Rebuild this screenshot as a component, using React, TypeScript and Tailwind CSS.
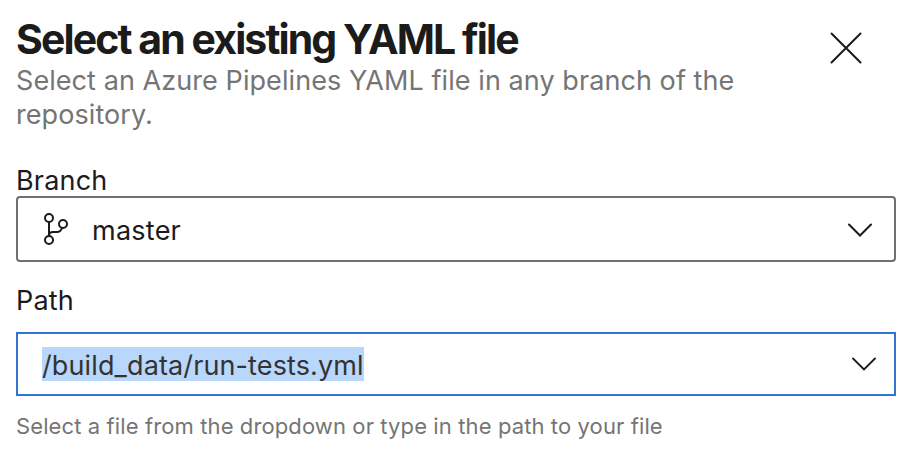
export default function App() {
  return (
    <main className="h-[458px] w-[912px] overflow-hidden bg-white px-4 font-['Inter',sans-serif] text-[#1b1b1b]">
      <header className="flex h-[132px] justify-between pt-4">
        <div>
          <h1 className="h-12 whitespace-nowrap text-[41px] font-bold leading-[46px] tracking-[-1.91px]">Select an existing YAML file</h1>
          <p className="whitespace-nowrap text-[27px] leading-[34px] tracking-[0.07px] text-[#757575]">
            <span className="block">Select an Azure Pipelines YAML file in any branch of the</span>
            <span className="block">repository.</span>
          </p>
        </div>
        <button aria-label="Close" className="mr-[34px] mt-4 h-8 w-8">
          <svg viewBox="0 0 32 32" className="h-8 w-8" fill="none" stroke="currentColor" strokeWidth="2" strokeLinecap="round"><path d="M1.5 1.5L30.5 30.5M30.5 1.5L1.5 30.5" /></svg>
        </button>
      </header>
      <section className="pt-8">
        <div className="h-8 text-[27px] leading-[34px] tracking-[0.2px]">Branch</div>
        <div className="flex h-[66px] items-center rounded-[4px] border-2 border-[#6f6f6f] pl-6 pr-[22px]">
          <svg viewBox="0 0 28 32" className="h-8 w-7" fill="none" stroke="currentColor" strokeWidth="2"><circle cx="7" cy="5" r="4" /><circle cx="7" cy="27" r="4" /><circle cx="21" cy="11" r="4" /><path d="M7 9v14M20 15c-1 3-2.5 4-5 4h-4c-2.5 0-4 1.2-4 3.5" /></svg>
          <span className="ml-[22px] flex-1 pt-1 text-[27px] tracking-[0.25px]">master</span>
          <svg viewBox="0 0 24 14" className="mt-px h-3.5 w-6" fill="none" stroke="currentColor" strokeWidth="2" strokeLinecap="round"><path d="M1 1.5L12 12.5L23 1.5" /></svg>
        </div>
      </section>
      <section className="pt-[22px]">
        <div className="h-12 text-[27px] leading-[34px] tracking-[0.2px]">Path</div>
        <div className="flex h-16 items-center border-2 border-[#3275ce] pl-6 pr-[18px]">
          <span className="h-[34px] bg-[#b9d6fb] pt-[3px] text-[27px] leading-[31px] tracking-[0.12px] text-[#333]">/build_data/run-tests.yml</span>
          <svg viewBox="0 0 24 14" className="ml-auto h-3.5 w-6" fill="none" stroke="currentColor" strokeWidth="1.8" strokeLinecap="round"><path d="M1 1.5L12 12.5L23 1.5" /></svg>
        </div>
        <p className="mt-4 text-[22px] leading-[28px] tracking-[0.11px] text-[#757575]">Select a file from the dropdown or type in the path to your file</p>
      </section>
    </main>
  );
}
